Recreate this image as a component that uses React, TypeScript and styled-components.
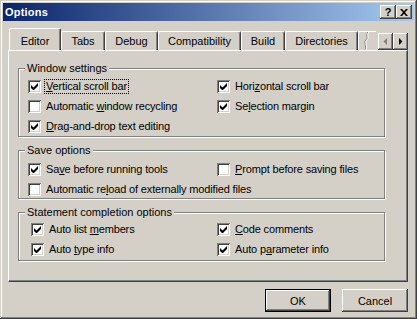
import React from 'react';
import styled, { createGlobalStyle } from 'styled-components';

const Global = createGlobalStyle`
    html, body {
        margin: 0;
        padding: 0;
        background: #D4D0C8;
    }
    body {
        font-family: "Liberation Sans", Arial, sans-serif;
        font-size: 11px;
        color: #000;
    }
`;

/* window frame */

const Window = styled.div`
    box-sizing: border-box;
    width: 417px;
    height: 319px;
    padding: 3px;
    background: #D4D0C8;
    display: flex;
    flex-direction: column;
    box-shadow:
        inset -1px -1px #404040,
        inset 1px 1px #D4D0C8,
        inset -2px -2px #808080,
        inset 2px 2px #FFFFFF;
`;

const TitleBar = styled.div`
    height: 18px;
    display: flex;
    align-items: center;
    justify-content: space-between;
    padding: 0 2px 0 2px;
    background: linear-gradient(to right, #0A246A, #A6CAF0);
`;

const Title = styled.span`
    color: #FFFFFF;
    font-weight: bold;
    font-size: 11px;
    letter-spacing: 0.2px;
`;

const CaptionButtons = styled.div`
    display: flex;
`;

const CaptionButton = styled.div`
    box-sizing: border-box;
    width: 16px;
    height: 14px;
    display: flex;
    align-items: center;
    justify-content: center;
    background: #D4D0C8;
    font-weight: bold;
    font-size: 11px;
    line-height: 1;
    box-shadow:
        inset -1px -1px #404040,
        inset 1px 1px #FFFFFF,
        inset -2px -2px #808080;
`;

const Body = styled.div`
    flex: 1;
    display: flex;
    flex-direction: column;
    padding: 7px 6px 0 5px;
`;

/* tabs */

const TabRow = styled.div`
    height: 22px;
    display: flex;
    align-items: flex-end;
`;

const TabStrip = styled.div`
    width: 369px;
    height: 22px;
    display: flex;
    align-items: flex-end;
    overflow: hidden;
    padding-left: 1px;
    box-sizing: border-box;
`;

const Tab = styled.div<{ $active?: boolean; $w: number }>`
    box-sizing: border-box;
    flex: none;
    width: ${p => p.$w}px;
    height: ${p => (p.$active ? 23 : 19)}px;
    margin-bottom: ${p => (p.$active ? -1 : 0)}px;
    padding-top: ${p => (p.$active ? 2 : 0)}px;
    display: flex;
    align-items: center;
    justify-content: center;
    position: relative;
    z-index: ${p => (p.$active ? 1 : 0)};
    background: #D4D0C8;
    border-top: 1px solid #FFFFFF;
    border-left: 1px solid #FFFFFF;
    border-right: 1px solid #404040;
    border-radius: 2px 2px 0 0;
    box-shadow: inset -1px 0 #808080;
`;

const TabStub = styled.div`
    flex: none;
    width: 18px;
    height: 19px;
    display: flex;
    box-sizing: border-box;
    border-top: 1px solid #FFFFFF;
    border-left: 1px solid #FFFFFF;
    border-radius: 2px 0 0 0;
`;

const Spin = styled.div`
    display: flex;
    margin-left: 1px;
`;

const SpinButton = styled.div`
    box-sizing: border-box;
    width: 15px;
    height: 17px;
    display: flex;
    align-items: center;
    justify-content: center;
    background: #D4D0C8;
    box-shadow:
        inset -1px -1px #404040,
        inset 1px 1px #FFFFFF,
        inset -2px -2px #808080;
`;

const Panel = styled.div`
    box-sizing: border-box;
    height: 232px;
    display: flex;
    flex-direction: column;
    padding: 0 0 0 9px;
    border-top: 1px solid #FFFFFF;
    border-left: 1px solid #FFFFFF;
    border-right: 1px solid #404040;
    border-bottom: 1px solid #404040;
    box-shadow: inset -1px -1px #808080;
`;

/* group boxes */

const GroupBox = styled.div<{ $top: number; $pt: number; $pb: number }>`
    position: relative;
    box-sizing: border-box;
    width: 367px;
    margin-top: ${p => p.$top}px;
    padding: ${p => p.$pt}px 0 ${p => p.$pb}px 0;
    border: 1px solid #808080;
    box-shadow: inset 1px 1px #FFFFFF, 1px 1px #FFFFFF;
`;

const Caption = styled.span`
    position: absolute;
    top: -7px;
    left: 6px;
    padding: 0 2px;
    background: #D4D0C8;
    line-height: 13px;
`;

const Grid = styled.div<{ $left: number }>`
    display: grid;
    grid-template-columns: ${p => 198 - p.$left}px 1fr;
    row-gap: 3px;
    padding-left: ${p => p.$left}px;
`;

const Item = styled.div<{ $span?: boolean }>`
    height: 17px;
    display: flex;
    align-items: center;
    white-space: nowrap;
    grid-column: ${p => (p.$span ? '1 / span 2' : 'auto')};
`;

const Box = styled.div`
    box-sizing: border-box;
    flex: none;
    width: 13px;
    height: 13px;
    display: flex;
    align-items: center;
    justify-content: center;
    background: #FFFFFF;
    box-shadow:
        inset 1px 1px #808080,
        inset -1px -1px #FFFFFF,
        inset 2px 2px #404040,
        inset -2px -2px #D4D0C8;
`;

const Label = styled.span<{ $focus?: boolean }>`
    margin-left: 3px;
    padding: 0 1px;
    line-height: 13px;
    letter-spacing: -0.15px;
    border: 1px ${p => (p.$focus ? 'dotted #000' : 'solid transparent')};
`;

/* bottom buttons */

const ButtonBar = styled.div`
    display: flex;
    justify-content: flex-end;
    gap: 11px;
    margin-top: 7px;
`;

const PushButton = styled.div<{ $default?: boolean }>`
    box-sizing: border-box;
    width: 66px;
    height: 23px;
    display: flex;
    align-items: center;
    justify-content: center;
    background: #D4D0C8;
    border: ${p => (p.$default ? '1px solid #000000' : 'none')};
    box-shadow:
        inset -1px -1px #404040,
        inset 1px 1px #FFFFFF,
        inset -2px -2px #808080,
        inset 2px 2px #D4D0C8;
`;

const Check = () => (
    <svg width="7" height="7" viewBox="0 0 7 7">
        <path d="M0 2v3l2 2h1l4-4V0L2.5 4.5z" fill="#000" />
    </svg>
);

type Opt = { text: React.ReactNode; checked: boolean; focus?: boolean; span?: boolean };

const CheckItem = ({ text, checked, focus, span }: Opt) => (
    <Item $span={span}>
        <Box>{checked && <Check />}</Box>
        <Label $focus={focus}>{text}</Label>
    </Item>
);

const Empty = styled.div``;

const tabs = [
    { name: 'Tabs', w: 44 },
    { name: 'Debug', w: 53 },
    { name: 'Compatibility', w: 83 },
    { name: 'Build', w: 44 },
    { name: 'Directories', w: 73 },
];

export default function App() {
    return (
        <>
            <Global />
            <Window>
                <TitleBar>
                    <Title>Options</Title>
                    <CaptionButtons>
                        <CaptionButton>?</CaptionButton>
                        <CaptionButton>
                            <svg width="8" height="7" viewBox="0 0 8 7">
                                <path d="M0 0h2l2 2.2L6 0h2L5 3.5 8 7H6L4 4.8 2 7H0l3-3.5z" fill="#000" />
                            </svg>
                        </CaptionButton>
                    </CaptionButtons>
                </TitleBar>
                <Body>
                    <TabRow>
                        <TabStrip>
                            <Tab $active $w={52}>Editor</Tab>
                            {tabs.map(t => (
                                <Tab key={t.name} $w={t.w}>{t.name}</Tab>
                            ))}
                            <TabStub>
                                <svg width="14" height="18" viewBox="0 0 14 18">
                                    <path d="M9 0c-3 3 1 5-2 8s1 6-1 10" stroke="#808080" fill="none" />
                                    <path d="M10 0c-3 3 1 5-2 8s1 6-1 10" stroke="#FFFFFF" fill="none" />
                                </svg>
                            </TabStub>
                        </TabStrip>
                        <Spin>
                            <SpinButton>
                                <svg width="5" height="8" viewBox="0 0 5 8">
                                    <path d="M4 0v7L0.5 3.5z" fill="#808080" />
                                </svg>
                            </SpinButton>
                            <SpinButton>
                                <svg width="5" height="8" viewBox="0 0 5 8">
                                    <path d="M1 0v7l3.5-3.5z" fill="#000" />
                                </svg>
                            </SpinButton>
                        </Spin>
                    </TabRow>
                    <Panel>
                        <GroupBox $top={17} $pt={9} $pb={1}>
                            <Caption>Window settings</Caption>
                            <Grid $left={9}>
                                <CheckItem checked focus text={<><u>V</u>ertical scroll bar</>} />
                                <CheckItem checked text={<>Hori<u>z</u>ontal scroll bar</>} />
                                <CheckItem checked={false} text={<>Automatic <u>w</u>indow recycling</>} />
                                <CheckItem checked text={<>Se<u>l</u>ection margin</>} />
                                <CheckItem checked text={<><u>D</u>rag-and-drop text editing</>} />
                                <Empty />
                            </Grid>
                        </GroupBox>
                        <GroupBox $top={13} $pt={10} $pb={0}>
                            <Caption>Save options</Caption>
                            <Grid $left={9}>
                                <CheckItem checked text={<>Sa<u>v</u>e before running tools</>} />
                                <CheckItem checked={false} text={<><u>P</u>rompt before saving files</>} />
                                <CheckItem span checked={false} text={<>Automatic re<u>l</u>oad of externally modified files</>} />
                            </Grid>
                        </GroupBox>
                        <GroupBox $top={13} $pt={8} $pb={2}>
                            <Caption>Statement completion options</Caption>
                            <Grid $left={12}>
                                <CheckItem checked text={<>Auto list <u>m</u>embers</>} />
                                <CheckItem checked text={<><u>C</u>ode comments</>} />
                                <CheckItem checked text={<>Auto <u>t</u>ype info</>} />
                                <CheckItem checked text={<>Auto p<u>a</u>rameter info</>} />
                            </Grid>
                        </GroupBox>
                    </Panel>
                    <ButtonBar>
                        <PushButton $default>OK</PushButton>
                        <PushButton>Cancel</PushButton>
                    </ButtonBar>
                </Body>
            </Window>
        </>
    );
}
